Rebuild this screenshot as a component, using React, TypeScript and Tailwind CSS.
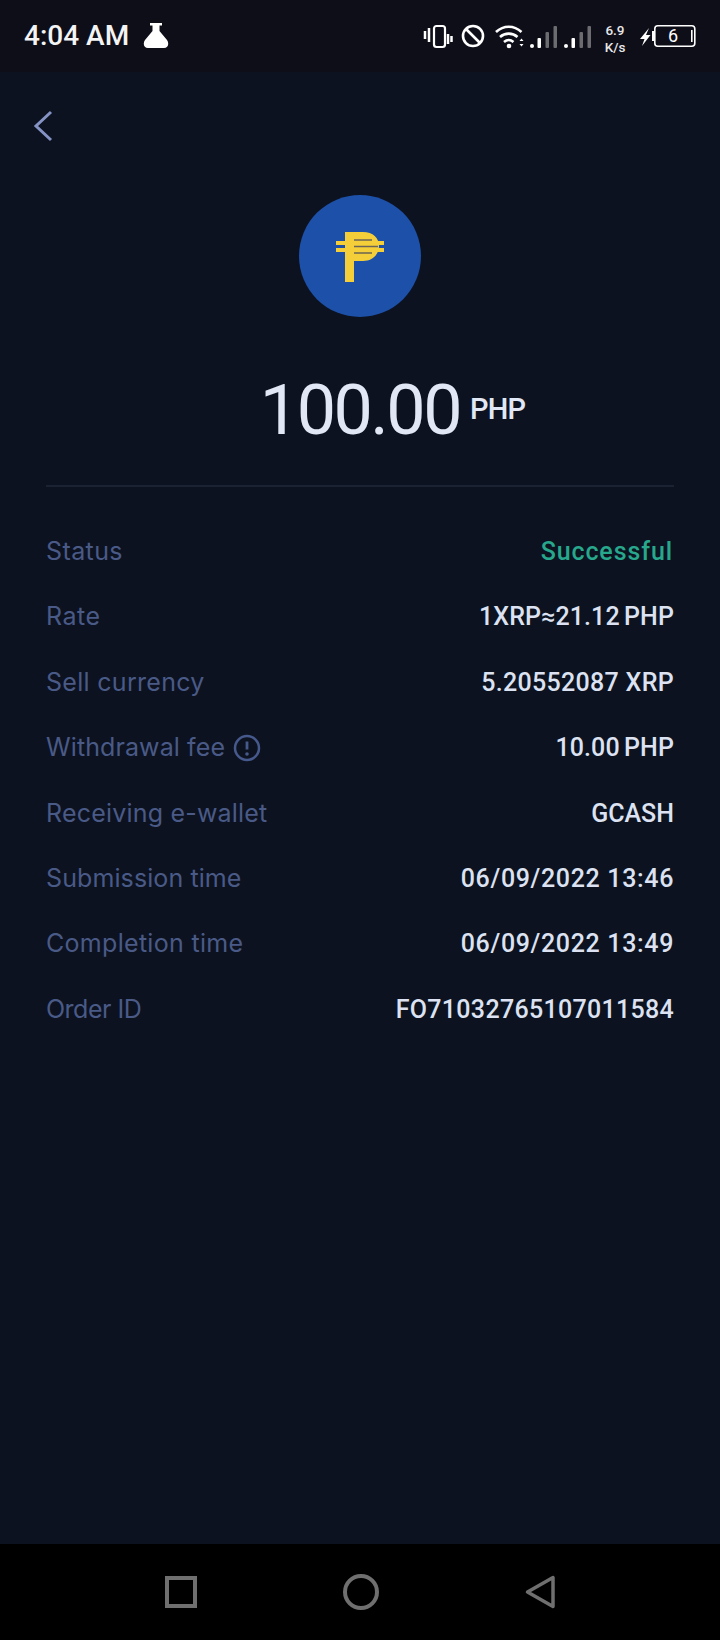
import { Fragment } from "react";

const rows = [
  { label: "Status", labelCls: "tracking-[0.400px]", value: "Successful", cls: "text-[#27a78c] tracking-[0.900px] pr-[1px]" },
  { label: "Rate", labelCls: "tracking-[0.500px]", value: "1XRP≈21.12 PHP", cls: "text-[#dce2f1] tracking-[0.100px] [word-spacing:-2px]" },
  { label: "Sell currency", labelCls: "tracking-[0.300px]", value: "5.20552087 XRP", cls: "text-[#dce2f1] tracking-[0.300px]" },
  { label: "Withdrawal fee", labelCls: "tracking-[0.100px]", value: "10.00 PHP", info: true, cls: "text-[#dce2f1] tracking-[0.100px] [word-spacing:-2px]" },
  { label: "Receiving e-wallet", labelCls: "tracking-[0.200px]", value: "GCASH", cls: "text-[#dce2f1]" },
  { label: "Submission time", labelCls: "tracking-[0.100px]", value: "06/09/2022 13:46", cls: "text-[#dce2f1] tracking-[0.650px]" },
  { label: "Completion time", labelCls: "tracking-[0.300px]", value: "06/09/2022 13:49", cls: "text-[#dce2f1] tracking-[0.650px]" },
  { label: "Order ID", labelCls: "tracking-[-0.500px]", value: "FO71032765107011584", cls: "text-[#dce2f1] tracking-[0.300px]" },
];

function Flask() {
  return (
    <svg width="26" height="26" viewBox="0 0 26 26" fill="white">
      <path d="M7 0h12v2.500h-2.500v5.500l7.500 9c2.500 3.500 1 8-3 8H5c-4 0-5.500-4.500-3-8l7.500-9V2.500H7z" />
    </svg>
  );
}

function StatusIcons() {
  return (
    <svg width="280" height="34" viewBox="0 0 280 34" fill="none" className="shrink-0">
      {/* vibrate */}
      <path d="M5 12v8M9 9v14" stroke="white" strokeWidth="2.500" />
      <rect x="14" y="7" width="11" height="21" rx="2.500" stroke="white" strokeWidth="2.200" />
      <path d="M28 15v10M31.500 17v6" stroke="white" strokeWidth="2.500" />
      {/* dnd */}
      <circle cx="53" cy="17" r="10" stroke="white" strokeWidth="2.600" />
      <path d="M46 10l14 14" stroke="white" strokeWidth="2.600" />
      {/* wifi */}
      <path d="M76 13c7.500-7 18-7 25.500 0M80 18c5-4.500 12.500-4.500 17.500 0M84 23c3-2.500 6.500-2.500 9.500 0" stroke="white" strokeWidth="2.600" />
      <circle cx="89" cy="27" r="2.300" fill="white" />
      <path d="M99.500 22l2-2.500 2 2.500zM99.500 25l2 2.500 2-2.500z" fill="white" />
      {/* signal 1 */}
      <rect x="110" y="25" width="4" height="4" rx="2" fill="white" />
      <rect x="117.500" y="19" width="3.500" height="10" rx="1" fill="white" />
      <rect x="125.500" y="13" width="3.500" height="16" rx="1" fill="#6b6b70" />
      <rect x="133.500" y="7" width="3.500" height="22" rx="1" fill="#6b6b70" />
      {/* signal 2 */}
      <rect x="144" y="25" width="4" height="4" rx="2" fill="white" />
      <rect x="151.500" y="19" width="3.500" height="10" rx="1" fill="white" />
      <rect x="159.500" y="13" width="3.500" height="16" rx="1" fill="#6b6b70" />
      <rect x="167.500" y="7" width="3.500" height="22" rx="1" fill="#6b6b70" />
      {/* charging */}
      <path d="M229 9l-9 11h4.500l-2.500 7 8.500-11H226z" fill="white" />
      <rect x="232" y="12" width="2.500" height="10" fill="white" />
      <rect x="234.800" y="6.800" width="40" height="20.500" rx="3" stroke="white" strokeWidth="1.600" />
      <rect x="271" y="11" width="1.600" height="12" fill="white" />
    </svg>
  );
}

export default function App() {
  return (
    <div
      className="flex h-[1640px] w-[720px] flex-col bg-[#0c1220]"
      style={{ fontFamily: '"Roboto", "Liberation Sans", sans-serif' }}
    >
      {/* status bar */}
      <div className="relative flex h-[72px] items-center justify-between bg-[#0e0e19] pl-6 pr-5">
        <div className="flex items-center gap-[14px]">
          <span className="text-[28px] font-medium text-[#f4f4f4]">4:04 AM</span>
          <Flask />
        </div>
        <div className="relative">
          <StatusIcons />
          <div className="absolute left-[179px] top-[3px] w-[32px] text-center text-[13.500px] font-medium leading-[16.500px] text-[#e8e8e8]">
            6.9
            <br />
            K/s
          </div>
          <span className="absolute left-[248px] top-[6px] text-[18px] leading-[22px] text-white">6</span>
        </div>
      </div>

      <div className="flex-1">
        <div className="pl-[33px] pt-[38px]">
          <svg width="20" height="32" viewBox="0 0 20 32" fill="none">
            <path d="M18 2 3 16l15 14" stroke="#8593c4" strokeWidth="3" />
          </svg>
        </div>

        <div className="mt-[53px] flex justify-center">
          <div className="flex h-[122px] w-[122px] items-center justify-center rounded-full bg-[#1d50a8]">
            <svg width="48" height="52" viewBox="0 0 48 52" className="mt-[1px]">
              <path d="M9 1h18c10 0 16 6 16 14s-6 15-16 15H18v21H9z" fill="#f4cf3a" />
              <path d="M0 12h48M0 19h48" stroke="#f4cf3a" strokeWidth="4" />
              <path d="M18 9h18M18 15.500h24M18 22h18" stroke="#6b6456" strokeWidth="1.500" />
            </svg>
          </div>
        </div>

        <div className="mt-[52px] flex items-center justify-center pl-[65px]">
          <span className="text-[70px] leading-[82px] tracking-[-2.500px] text-[#e1e7f5]">100.00</span>
          <span className="ml-[10px] text-[29px] font-medium tracking-[-0.800px] text-[#e1e7f5]">PHP</span>
        </div>

        <div className="mx-[46px] mt-[34px] h-[2px] bg-[#1b2333]" />

        <div className="mt-[48px] grid grid-cols-[auto_1fr] gap-y-[32.400px] px-[46px] text-[25px] leading-[33px]">
          {rows.map((r) => (
            <Fragment key={r.label}>
              <div
                className={"flex items-center gap-[8px] text-[#4a5a87] " + r.labelCls}
                style={{ fontFamily: '"Inter", sans-serif' }}
              >
                {r.label}
                {r.info && (
                  <svg width="28" height="28" viewBox="0 0 28 28" fill="none">
                    <circle cx="14" cy="14" r="12" stroke="#46598c" strokeWidth="2.500" />
                    <path d="M14 7.500v8" stroke="#46598c" strokeWidth="2.800" />
                    <circle cx="14" cy="20" r="1.800" fill="#46598c" />
                  </svg>
                )}
              </div>
              <div className={"text-right font-medium " + r.cls}>{r.value}</div>
            </Fragment>
          ))}
        </div>
      </div>

      {/* nav bar */}
      <div className="flex h-[96px] items-center justify-center gap-[146px] bg-black">
        <div className="h-8 w-8 border-4 border-[#6f6f6f]" />
        <div className="h-9 w-9 rounded-full border-4 border-[#6f6f6f]" />
        <svg width="30" height="34" viewBox="0 0 30 34" fill="none">
          <path d="M28 2.500v29L2.500 17z" stroke="#6f6f6f" strokeWidth="3.500" strokeLinejoin="round" />
        </svg>
      </div>
    </div>
  );
}
